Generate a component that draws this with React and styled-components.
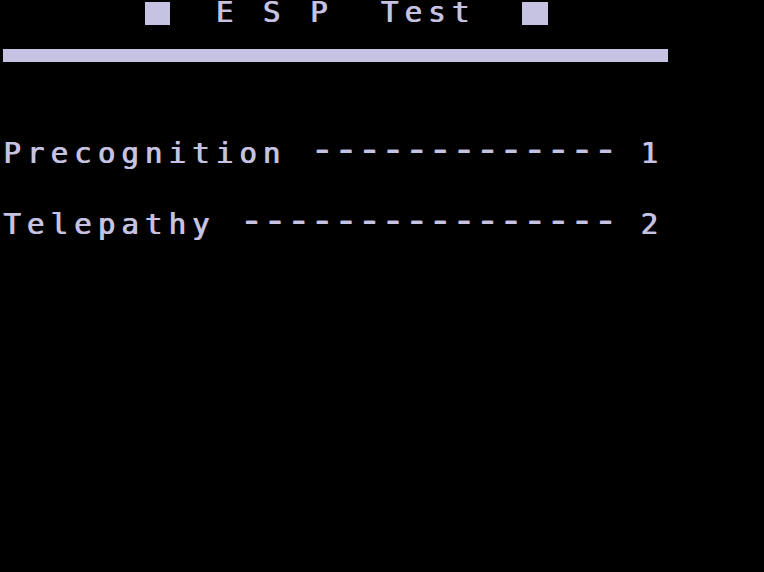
import React from "react";
import styled, { createGlobalStyle } from "styled-components";

const CELL = 23.6;
const INK = "#c6c3e2";

const GlobalStyle = createGlobalStyle`
  html, body {
    margin: 0;
    padding: 0;
    background: #000;
  }
`;

const Screen = styled.div`
  width: 764px;
  height: 572px;
  background: #000;
  color: ${INK};
  font-family: "DejaVu Sans Mono", "Liberation Mono", monospace;
  font-size: 29px;
  letter-spacing: ${CELL - 17.46}px;
  text-shadow: 1px 0 0 ${INK};
  overflow: hidden;
  padding: 1px 0 0 3px;
  box-sizing: border-box;
`;

const Line = styled.div`
  height: ${CELL}px;
  line-height: ${CELL}px;
  white-space: pre;
  margin-top: ${(p) => (p.$skip || 0) * CELL}px;
`;

const Block = styled.span`
  display: inline-block;
  vertical-align: top;
  width: ${CELL + 2}px;
  height: 23px;
  margin: 1px ${CELL - (CELL + 2)}px 0 0;
  background: ${INK};
`;

// the leader dashes on the old screen are wider than a normal hyphen
const Leader = styled.span`
  font-size: 40px;
  line-height: 0;
  letter-spacing: ${CELL - 24.08}px;
`;

const Rule = styled.div`
  width: 665px;
  height: 13px;
  background: ${INK};
  margin-top: ${CELL + 0.5}px;
`;

const menu = [
  { label: "Precognition", key: "1" },
  { label: "Telepathy", key: "2" },
];

const MenuLine = ({ label, choice, skip }) => {
  // pad every entry out to the same 28-column row with a dashed leader
  const dashes = "-".repeat(28 - label.length - 3);
  return (
    <Line $skip={skip}>
      {`${label} `}
      <Leader>{dashes}</Leader>
      {` ${choice}`}
    </Line>
  );
};

export default function App() {
  return (
    <>
      <GlobalStyle />
      <Screen>
        <Line>
          {"      "}
          <Block />
          {"  E S P  Test  "}
          <Block />
        </Line>
        <Rule />
        <MenuLine label={menu[0].label} choice={menu[0].key} skip={3.4} />
        <MenuLine label={menu[1].label} choice={menu[1].key} skip={2} />
      </Screen>
    </>
  );
}
